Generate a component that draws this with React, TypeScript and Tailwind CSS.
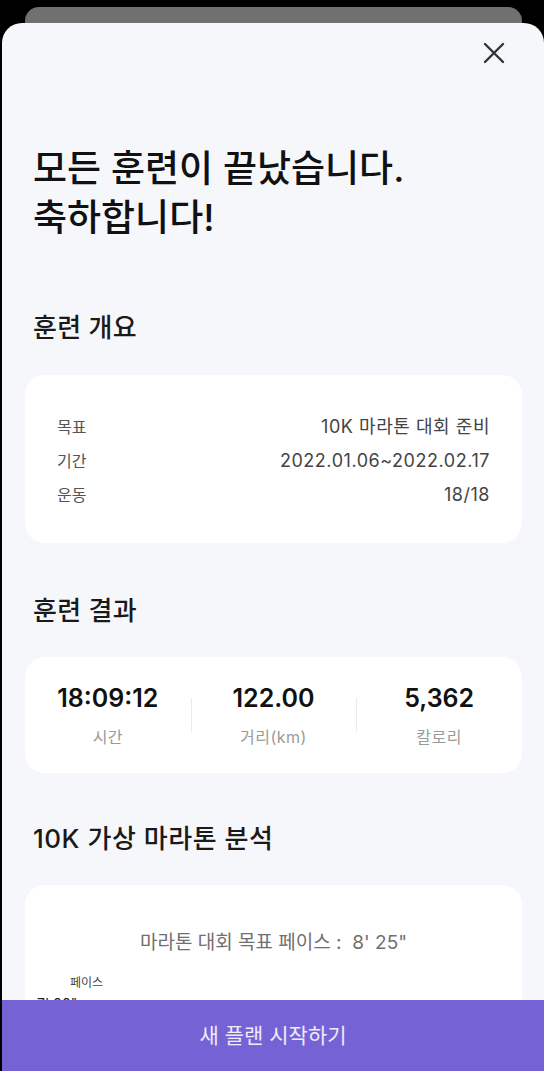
const rows = [
  { label: '목표', value: '10K 마라톤 대회 준비' },
  { label: '기간', value: '2022.01.06~2022.02.17' },
  { label: '운동', value: '18/18' },
];

const stats = [
  { value: '18:09:12', label: '시간' },
  { value: '122.00', label: '거리(km)' },
  { value: '5,362', label: '칼로리' },
];

function CloseIcon() {
  return (
    <svg width="22" height="22" viewBox="0 0 22 22" fill="none">
      <path d="M2 2L20 20M20 2L2 20" stroke="#333333" strokeWidth="2.4" strokeLinecap="round" />
    </svg>
  );
}

export default function App() {
  return (
    <div className="w-[544px] h-[1071px] bg-black flex flex-col overflow-hidden font-['Inter','Noto_Sans_CJK_KR',sans-serif]">
      {/* card behind the sheet */}
      <div className="h-[16px] mt-[7px] ml-[25px] mr-[22px] rounded-t-[14px] bg-[#707070] shrink-0" />

      <div className="flex-1 ml-[2px] rounded-t-[20px] bg-[#f6f7fb] flex flex-col overflow-hidden">
        <div className="flex-1 overflow-hidden">
          <div className="pt-[10px] pr-[30px] flex justify-end">
            <button className="w-10 h-10 flex items-center justify-center">
              <CloseIcon />
            </button>
          </div>

          <h1 className="mt-[71px] pl-[31px] text-[37px] leading-[49px] font-medium text-[#111111]">
            모든 훈련이 끝났습니다.
            <br />
            축하합니다!
          </h1>

          <h2 className="mt-[70px] pl-[31px] text-[26px] leading-[32px] tracking-[0.01em] font-medium text-[#1a1a1a]">훈련 개요</h2>
          <div className="mt-[31px] ml-[23px] mr-[22px] rounded-[20px] bg-white pt-[35px] pb-[31px] px-[32px]">
            {rows.map((r) => (
              <div key={r.label} className="flex justify-between items-center leading-[34px]">
                <span className="text-[16px] text-[#555555]">{r.label}</span>
                <span className="text-[18px] tracking-[0.03em] text-[#444444]">{r.value}</span>
              </div>
            ))}
          </div>

          <h2 className="mt-[52px] pl-[31px] text-[26px] leading-[32px] tracking-[0.01em] font-medium text-[#1a1a1a]">훈련 결과</h2>
          <div className="mt-[30px] ml-[23px] mr-[22px] rounded-[20px] bg-white pt-[26px] pb-[25px] grid grid-cols-3">
            {stats.map((s, i) => (
              <div key={s.label} className="relative flex flex-col items-center">
                {i > 0 && <div className="absolute left-0 top-[15px] h-[34px] w-px bg-[#ebebeb]" />}
                <span className="text-[25px] leading-[30px] font-semibold text-[#111111]">{s.value}</span>
                <span className="mt-[13px] text-[16px] leading-[22px] tracking-[0.03em] text-[#9a9a9a]">{s.label}</span>
              </div>
            ))}
          </div>

          <h2 className="mt-[50px] pl-[31px] text-[26px] leading-[32px] tracking-[0.02em] font-medium text-[#1a1a1a]">10K 가상 마라톤 분석</h2>
          <div className="mt-[30px] ml-[23px] mr-[22px] rounded-[20px] bg-white pt-[45px] pb-[40px] h-[400px]">
            <p className="text-center text-[19px] leading-[26px] text-[#707070]">마라톤 대회 목표 페이스 :&nbsp; 8' 25"</p>
            <p className="mt-[19px] pl-[45px] text-[12px] leading-[16px] text-[#444444]">페이스</p>
            <p className="mt-[4px] pl-[12px] text-[14px] leading-[18px] text-[#222222]">7' 00"</p>
          </div>
        </div>

        <button className="h-[71px] shrink-0 bg-[#7563d6] text-[21px] text-[#eeebfb] font-normal">
          새 플랜 시작하기
        </button>
      </div>
    </div>
  );
}
